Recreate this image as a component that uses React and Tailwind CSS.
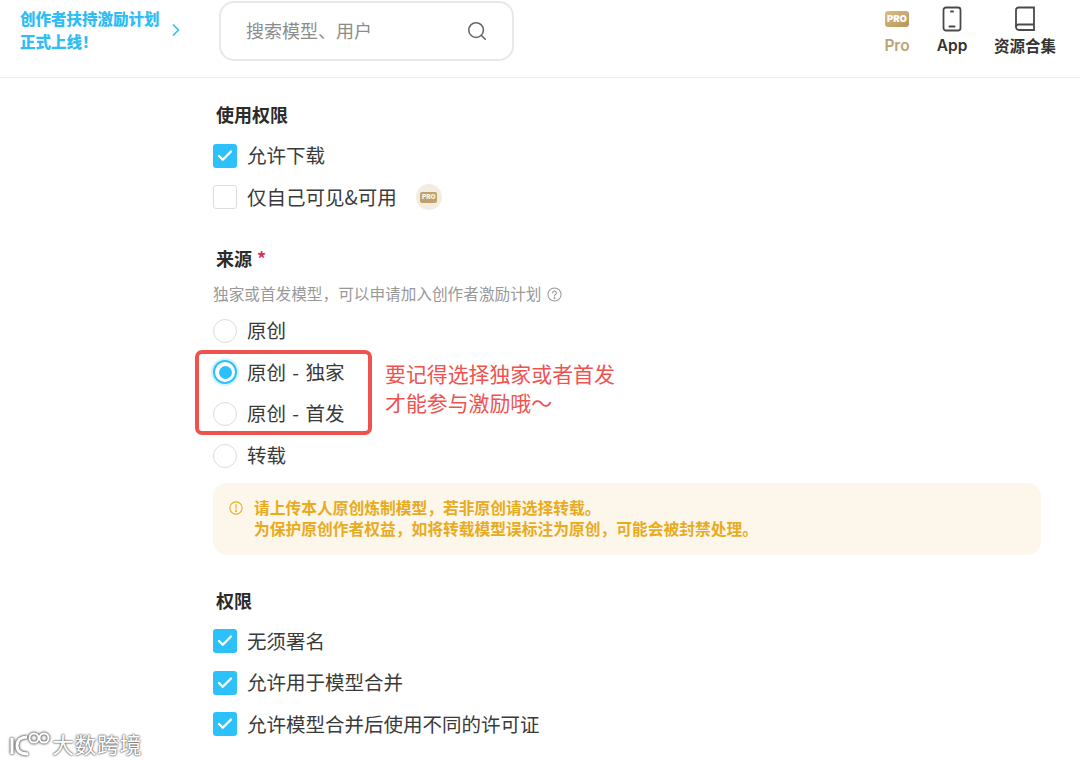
import { Search, ChevronRight, Check } from "lucide-react";

const font = { fontFamily: '"Noto Sans CJK SC", "Noto Sans", sans-serif' };
const latin = { fontFamily: 'Inter, "Noto Sans CJK SC", sans-serif' };

function ProBadge({ small }) {
  return (
    <div
      style={latin}
      className={
        small
          ? "flex h-[11px] w-[17px] items-center justify-center rounded-[2px] bg-[#bfa26a] text-[6.5px] font-black leading-none text-[#f6f0e2]"
          : "flex h-[16px] w-[24px] items-center justify-center rounded-[3px] bg-gradient-to-br from-[#d9bd85] to-[#b89558] text-[9.5px] font-black leading-none text-white"
      }
    >
      PRO
    </div>
  );
}

function CheckRow({ checked, children }) {
  return (
    <div className="flex h-[41.5px] items-center">
      {checked ? (
        <div className="flex h-6 w-6 items-center justify-center rounded-[3px] bg-[#2cc1fb]">
          <Check size={18} strokeWidth={3.2} className="text-white" />
        </div>
      ) : (
        <div className="h-6 w-6 rounded-[3px] border border-[#dddddd] bg-white" />
      )}
      <div className="ml-[10px] flex items-center pb-[2px] text-[19.5px] text-[#3a3a3a]">{children}</div>
    </div>
  );
}

function RadioRow({ checked, children }) {
  return (
    <div className="flex h-[41.6px] items-center">
      {checked ? (
        <div className="flex h-6 w-6 items-center justify-center rounded-full border-2 border-[#2cc1fb] bg-white shadow-[0_0_0_2px_#d5f3fe]">
          <div className="h-[13px] w-[13px] rounded-full bg-[#2cc1fb]" />
        </div>
      ) : (
        <div className="h-6 w-6 rounded-full border border-[#dddddd] bg-white" />
      )}
      <div className="ml-[10px] pb-[2px] text-[19.5px] text-[#3a3a3a] [word-spacing:2px]">{children}</div>
    </div>
  );
}

function Title({ children }) {
  return <div className="pl-[3px] text-[18px] font-bold leading-[26px] text-[#2b2b2b]">{children}</div>;
}

export default function App() {
  return (
    <div style={font} className="relative h-[765px] w-[1080px] overflow-hidden bg-white">
      <header className="flex h-[78px] items-start border-b border-[#eeeeee]">
        <div className="ml-5 mt-[7px] w-[144px] text-[15.5px] font-black leading-[23px] text-[#2fbdf6]">
          <div className="whitespace-nowrap">创作者扶持激励计划</div>
          <div>正式上线！</div>
        </div>
        <ChevronRight size={20} className="ml-[2px] mt-[20px] text-[#2fbdf6]" />
        <div className="ml-[33px] mt-[1px] flex h-[60px] w-[295px] items-center justify-between rounded-[15px] border-2 border-[#e8e8e8] pl-[25px] pr-[24px]">
          <span className="pb-[2px] text-[18px] text-[#8c8c8c]">搜索模型、用户</span>
          <Search size={22} strokeWidth={1.7} className="text-[#666666]" />
        </div>
        <nav className="ml-auto mr-[24px] mt-[6px] flex">
          <div className="flex w-[26px] flex-col items-center">
            <div className="flex h-[26px] items-center">
              <ProBadge />
            </div>
            <div style={latin} className="mt-[2px] text-[15.5px] font-semibold leading-[24px] text-[#bda373]">Pro</div>
          </div>
          <div className="ml-[27px] flex w-[30px] flex-col items-center">
            <svg width="20" height="26" viewBox="0 0 20 26" fill="none" stroke="#4a4a4a" strokeWidth="1.8">
              <rect x="1.5" y="1.5" width="17" height="23" rx="2.5" />
              <path d="M9 5.5h2M7.5 20.5h5" strokeLinecap="round" strokeWidth="2" />
            </svg>
            <div style={latin} className="mt-[2px] text-[15.5px] font-semibold leading-[24px] text-[#333333]">App</div>
          </div>
          <div className="ml-[27px] flex w-[62px] flex-col items-center">
            <svg width="22" height="26" viewBox="0 0 22 26" fill="none" stroke="#4a4a4a" strokeWidth="1.8">
              <path d="M2 21V4a2.5 2.5 0 0 1 2.5-2.5H20v22.5H5a3 3 0 0 1-3-3Z" />
              <path d="M2 21a2.5 2.5 0 0 1 2.5-2.5H20" />
            </svg>
            <div className="mt-[2px] whitespace-nowrap text-[15.5px] font-bold text-[#333333]">资源合集</div>
          </div>
        </nav>
      </header>

      <main className="pl-[213px] pr-[39px] pt-[23px]">
        <Title>使用权限</Title>
        <div className="mt-[8px]">
          <CheckRow checked>允许下载</CheckRow>
          <CheckRow>
            仅自己可见&amp;可用
            <div className="ml-[19px] mt-[2px] flex h-[26px] w-[26px] items-center justify-center rounded-full bg-[#f3ede1]">
              <ProBadge small />
            </div>
          </CheckRow>
        </div>

        <div className="mt-[27px] pl-[3px] text-[18px] font-bold leading-[26px] text-[#2b2b2b]">
          来源 <span className="ml-[1px] text-[#d9325a]">*</span>
        </div>
        <div className="mt-[12px] flex items-center text-[15.65px] leading-[22px] text-[#999999]">
          独家或首发模型，可以申请加入创作者激励计划
          <svg width="15" height="15" viewBox="0 0 16 16" fill="none" stroke="#999999" strokeWidth="1.1" className="ml-[6px]">
            <circle cx="8" cy="8" r="7" />
            <path d="M6 6.3a2 2 0 1 1 3 1.7c-.7.4-1 .8-1 1.6" strokeLinecap="round" />
            <circle cx="8" cy="11.8" r=".5" fill="#999999" />
          </svg>
        </div>
        <div className="mt-[5px]">
          <RadioRow>原创</RadioRow>
          <RadioRow checked>原创 - 独家</RadioRow>
          <RadioRow>原创 - 首发</RadioRow>
          <RadioRow>转载</RadioRow>
        </div>

        <div className="mt-[7px] flex h-[72px] items-start rounded-[14px] bg-[#fdf6ea] pl-[16px] pt-[14px] text-[#e8ab1e]">
          <svg width="14" height="14" viewBox="0 0 16 16" fill="none" stroke="#e8ab1e" strokeWidth="1.2" className="mt-[4px] shrink-0">
            <circle cx="8" cy="8" r="7" />
            <path d="M8 4v5" strokeLinecap="round" />
            <circle cx="8" cy="11.5" r=".5" fill="#e8ab1e" />
          </svg>
          <div className="ml-[11px] text-[15.75px] font-bold leading-[21px]">
            <div>请上传本人原创炼制模型，若非原创请选择转载。</div>
            <div>为保护原创作者权益，如将转载模型误标注为原创，可能会被封禁处理。</div>
          </div>
        </div>

        <div className="mt-[32px]">
          <Title>权限</Title>
        </div>
        <div className="mt-[7px]">
          <CheckRow checked>无须署名</CheckRow>
          <CheckRow checked>允许用于模型合并</CheckRow>
          <CheckRow checked>允许模型合并后使用不同的许可证</CheckRow>
        </div>
      </main>

      {/* annotation drawn on top of the screenshot */}
      <div className="absolute left-[195px] top-[350px] h-[85px] w-[177px] rounded-[7px] border-[4px] border-[#ef5350]" />
      <div className="absolute left-[385px] top-[359px] text-[20.9px] leading-[29px] text-[#ef5350]">
        <div>要记得选择独家或者首发</div>
        <div>才能参与激励哦～</div>
      </div>

      {/* watermark */}
      <div className="absolute left-[9px] top-[729px] flex items-center">
        <svg
          width="42"
          height="28"
          viewBox="0 0 42 28"
          fill="none"
          stroke="#ffffff"
          strokeWidth="3"
          style={{ filter: "drop-shadow(0 0 1px #555555) drop-shadow(0 0 1px #888888)" }}
        >
          <path d="M3 9v16" />
          <path d="M18 8c-6 0-10 3-10 8.500s4 8.500 11 8.500" />
          <circle cx="25" cy="9" r="4.500" strokeWidth="2" />
          <circle cx="35" cy="9" r="4.500" strokeWidth="2" />
        </svg>
        <div
          className="ml-[1px] text-[22px] leading-none tracking-[0.5px] text-white"
          style={{ textShadow: "0 0 2px #555555, 0 0 2px #555555" }}
        >
          大数跨境
        </div>
      </div>
    </div>
  );
}
